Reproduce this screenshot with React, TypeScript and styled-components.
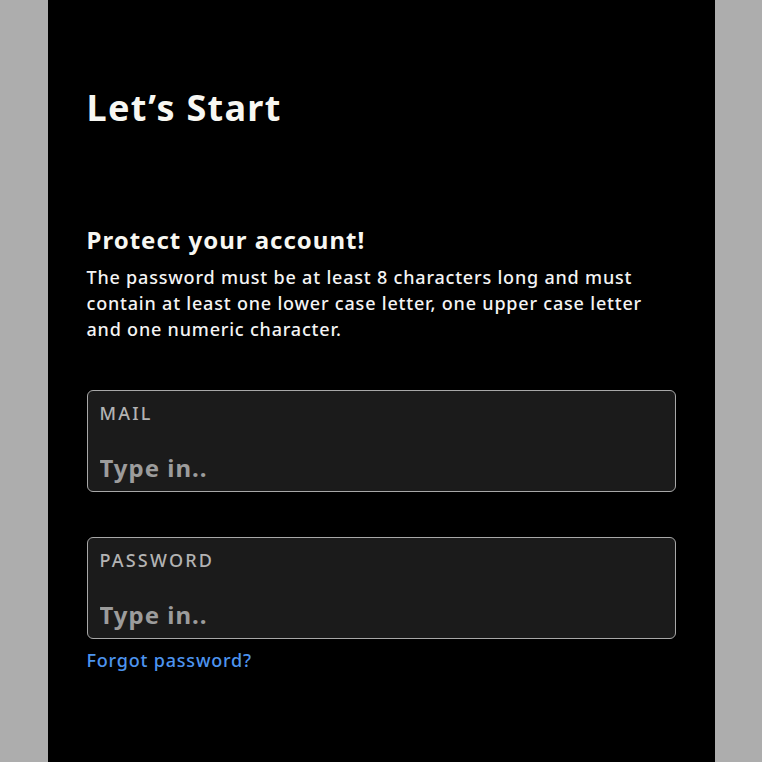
import styled, { createGlobalStyle } from "styled-components";

const GlobalStyle = createGlobalStyle`
  html, body {
    margin: 0;
    padding: 0;
    background: #adadad;
    font-family: "Noto Sans", "Open Sans", sans-serif;
  }
`;

const Page = styled.div`
  display: flex;
  justify-content: center;
  min-height: 762px;
`;

const Panel = styled.main`
  width: 667px;
  background: #000;
  color: #f7f7f2;
  padding: 82px 39px 40px;
  box-sizing: border-box;
  display: flex;
  flex-direction: column;
`;

const Title = styled.h1`
  margin: 0;
  font-size: 36px;
  font-weight: 700;
  line-height: 52px;
  letter-spacing: 1.3px;
`;

const Intro = styled.section`
  margin-top: 89px;
`;

const Heading = styled.h2`
  margin: 0 0 7px;
  font-size: 24px;
  font-weight: 700;
  line-height: 34px;
  letter-spacing: 1px;
`;

const Text = styled.p`
  margin: 0;
  font-size: 18px;
  font-weight: 500;
  line-height: 26px;
  letter-spacing: 0.8px;
  color: #f4f4f4;
`;

const Form = styled.form`
  margin-top: 48px;
  display: flex;
  flex-direction: column;
  gap: 45px;
`;

const Field = styled.label`
  display: flex;
  flex-direction: column;
  height: 102px;
  box-sizing: border-box;
  padding: 10px 12px 0;
  background: #1b1b1b;
  border: 1.5px solid #a8a8a8;
  border-radius: 6px;
`;

const FieldLabel = styled.span`
  font-size: 18px;
  font-weight: 500;
  line-height: 24px;
  letter-spacing: 2.2px;
  color: #b3b3b3;
`;

const FieldInput = styled.input`
  margin-top: 26px;
  background: transparent;
  border: none;
  outline: none;
  padding: 0;
  font-family: inherit;
  font-size: 24px;
  font-weight: 700;
  line-height: 34px;
  letter-spacing: 1px;
  color: #e0e0e0;

  &::placeholder {
    color: #9c9c9c;
    opacity: 1;
  }
`;

const PasswordGroup = styled.div`
  display: flex;
  flex-direction: column;
  gap: 8px;
`;

const Link = styled.a`
  font-size: 18px;
  font-weight: 500;
  line-height: 26px;
  letter-spacing: 0.8px;
  color: #4d94ef;
  text-decoration: none;
  align-self: flex-start;
`;

export default function App() {
  return (
    <>
      <GlobalStyle />
      <Page>
        <Panel>
          <Title>Let’s Start</Title>
          <Intro>
            <Heading>Protect your account!</Heading>
            <Text>
              The password must be at least 8 characters long and must contain at least one lower
              case letter, one upper case letter and one numeric character.
            </Text>
          </Intro>
          <Form onSubmit={e => e.preventDefault()}>
            <Field>
              <FieldLabel>MAIL</FieldLabel>
              <FieldInput type="email" placeholder="Type in.." />
            </Field>
            <PasswordGroup>
              <Field>
                <FieldLabel>PASSWORD</FieldLabel>
                <FieldInput type="password" placeholder="Type in.." />
              </Field>
              <Link href="#">Forgot password?</Link>
            </PasswordGroup>
          </Form>
        </Panel>
      </Page>
    </>
  );
}
